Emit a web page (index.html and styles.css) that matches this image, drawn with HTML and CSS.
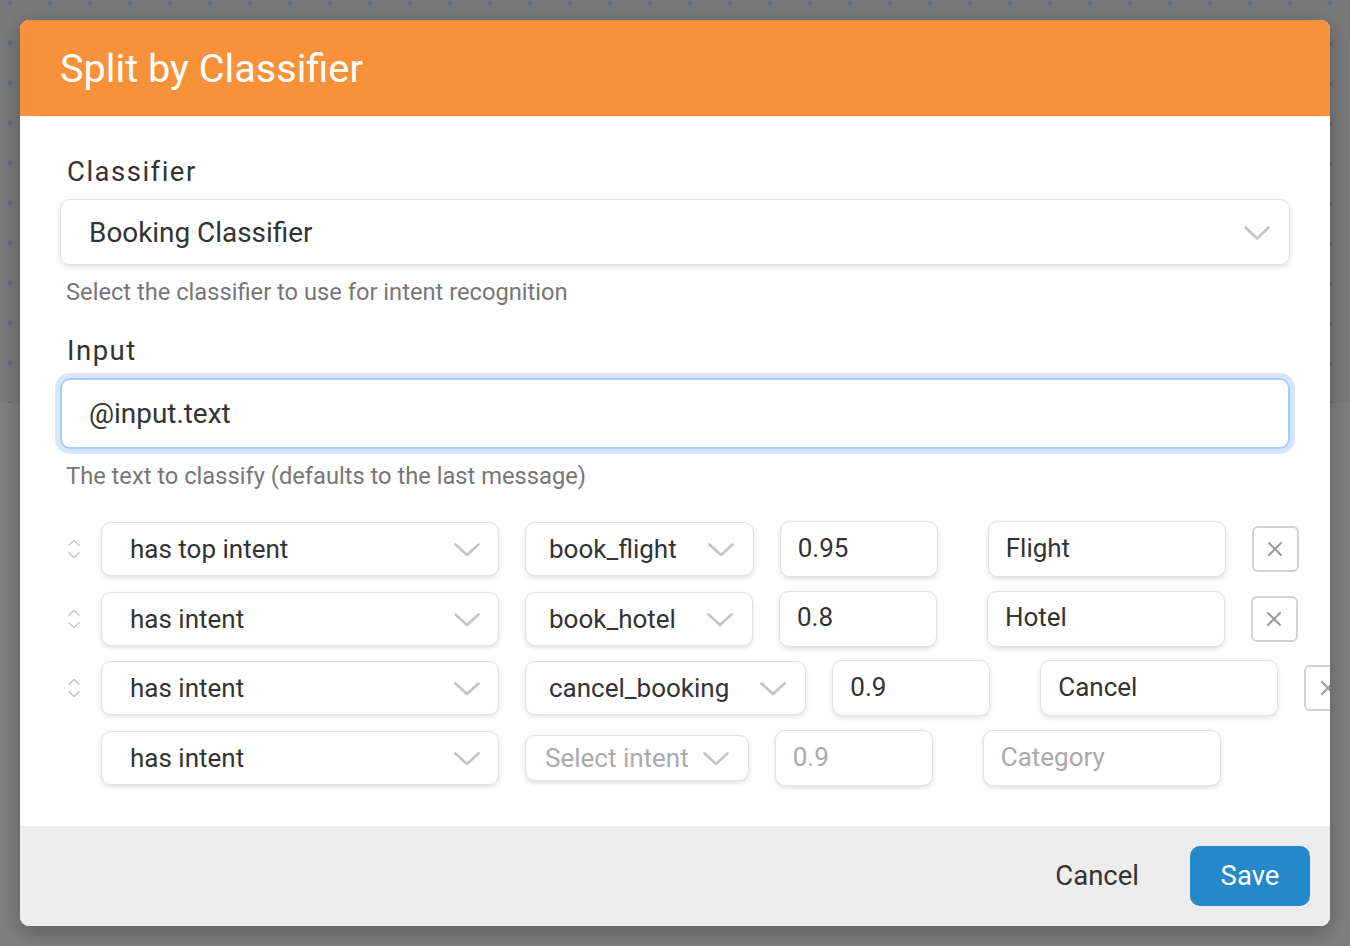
FILE: index.html
```html
<!DOCTYPE html>
<html lang="en">
<head>
<meta charset="utf-8">
<title>Split by Classifier</title>
<link rel="stylesheet" href="styles.css">
</head>
<body>
<div class="dialog">
  <div class="dialog-header">Split by Classifier</div>
  <div class="dialog-body">
    <div class="field">
      <div class="label">Classifier</div>
      <div class="select-lg">
        <span>Booking Classifier</span>
        <svg class="chev-lg" width="26" height="15" viewBox="0 0 26 15"><polyline points="1.5,1.5 13,12.5 24.5,1.5" fill="none" stroke="#c4c4c4" stroke-width="2.6" stroke-linecap="round" stroke-linejoin="round"/></svg>
      </div>
      <div class="help">Select the classifier to use for intent recognition</div>
    </div>
    <div class="field field-input">
      <div class="label">Input</div>
      <div class="input-lg">@input.text</div>
      <div class="help">The text to classify (defaults to the last message)</div>
    </div>

    <div class="rows">
      <div class="row">
        <div class="handle"><svg width="14" height="20" viewBox="0 0 14 20"><polyline points="1.5,6.5 7,1.5 12.5,6.5" fill="none" stroke="#c6c6c6" stroke-width="1.6"/><polyline points="1.5,13.5 7,18.5 12.5,13.5" fill="none" stroke="#c6c6c6" stroke-width="1.6"/></svg></div>
        <div class="box op-select"><span>has top intent</span><svg class="chev" width="26" height="14" viewBox="0 0 26 14"><polyline points="1.5,1.5 13,12 24.5,1.5" fill="none" stroke="#c4c4c4" stroke-width="2.6" stroke-linecap="round" stroke-linejoin="round"/></svg></div>
        <div class="box intent-select"><span>book_flight</span><svg class="chev" width="26" height="14" viewBox="0 0 26 14"><polyline points="1.5,1.5 13,12 24.5,1.5" fill="none" stroke="#c4c4c4" stroke-width="2.6" stroke-linecap="round" stroke-linejoin="round"/></svg></div>
        <div class="box threshold">0.95</div>
        <div class="box category">Flight</div>
        <div class="remove"><svg width="16" height="16" viewBox="0 0 16 16"><path d="M2 2 L14 14 M14 2 L2 14" stroke="#9a9a9a" stroke-width="2" stroke-linecap="round"/></svg></div>
      </div>
      <div class="row">
        <div class="handle"><svg width="14" height="20" viewBox="0 0 14 20"><polyline points="1.5,6.5 7,1.5 12.5,6.5" fill="none" stroke="#c6c6c6" stroke-width="1.6"/><polyline points="1.5,13.5 7,18.5 12.5,13.5" fill="none" stroke="#c6c6c6" stroke-width="1.6"/></svg></div>
        <div class="box op-select"><span>has intent</span><svg class="chev" width="26" height="14" viewBox="0 0 26 14"><polyline points="1.5,1.5 13,12 24.5,1.5" fill="none" stroke="#c4c4c4" stroke-width="2.6" stroke-linecap="round" stroke-linejoin="round"/></svg></div>
        <div class="box intent-select"><span>book_hotel</span><svg class="chev" width="26" height="14" viewBox="0 0 26 14"><polyline points="1.5,1.5 13,12 24.5,1.5" fill="none" stroke="#c4c4c4" stroke-width="2.6" stroke-linecap="round" stroke-linejoin="round"/></svg></div>
        <div class="box threshold">0.8</div>
        <div class="box category">Hotel</div>
        <div class="remove"><svg width="16" height="16" viewBox="0 0 16 16"><path d="M2 2 L14 14 M14 2 L2 14" stroke="#9a9a9a" stroke-width="2" stroke-linecap="round"/></svg></div>
      </div>
      <div class="row">
        <div class="handle"><svg width="14" height="20" viewBox="0 0 14 20"><polyline points="1.5,6.5 7,1.5 12.5,6.5" fill="none" stroke="#c6c6c6" stroke-width="1.6"/><polyline points="1.5,13.5 7,18.5 12.5,13.5" fill="none" stroke="#c6c6c6" stroke-width="1.6"/></svg></div>
        <div class="box op-select"><span>has intent</span><svg class="chev" width="26" height="14" viewBox="0 0 26 14"><polyline points="1.5,1.5 13,12 24.5,1.5" fill="none" stroke="#c4c4c4" stroke-width="2.6" stroke-linecap="round" stroke-linejoin="round"/></svg></div>
        <div class="box intent-select"><span>cancel_booking</span><svg class="chev" width="26" height="14" viewBox="0 0 26 14"><polyline points="1.5,1.5 13,12 24.5,1.5" fill="none" stroke="#c4c4c4" stroke-width="2.6" stroke-linecap="round" stroke-linejoin="round"/></svg></div>
        <div class="box threshold">0.9</div>
        <div class="box category">Cancel</div>
        <div class="remove"><svg width="16" height="16" viewBox="0 0 16 16"><path d="M2 2 L14 14 M14 2 L2 14" stroke="#9a9a9a" stroke-width="2" stroke-linecap="round"/></svg></div>
      </div>
      <div class="row">
        <div class="handle"></div>
        <div class="box op-select"><span>has intent</span><svg class="chev" width="26" height="14" viewBox="0 0 26 14"><polyline points="1.5,1.5 13,12 24.5,1.5" fill="none" stroke="#c4c4c4" stroke-width="2.6" stroke-linecap="round" stroke-linejoin="round"/></svg></div>
        <div class="box intent-select placeholder-select"><span>Select intent</span><svg class="chev" width="26" height="14" viewBox="0 0 26 14"><polyline points="1.5,1.5 13,12 24.5,1.5" fill="none" stroke="#c4c4c4" stroke-width="2.6" stroke-linecap="round" stroke-linejoin="round"/></svg></div>
        <div class="box threshold placeholder">0.9</div>
        <div class="box category placeholder">Category</div>
      </div>
    </div>
  </div>
  <div class="dialog-footer">
    <button class="btn btn-cancel">Cancel</button>
    <button class="btn btn-save">Save</button>
  </div>
</div>
</body>
</html>
```

FILE: styles.css
```css
html, body {
  margin: 0;
  height: 100%;
}

body {
  box-sizing: border-box;
  padding: 20px;
  font-family: Roboto, "Liberation Sans", sans-serif;
  color: #333;
  background:
    linear-gradient(to bottom, transparent 403px, #7f7f7f 403px),
    radial-gradient(circle at 20px 20px, #5c6c7e 0, #5c6c7e 2px, transparent 2.6px) -10px -16.5px / 40px 40px,
    #7a7a7a;
  overflow: hidden;
}

.dialog {
  width: 1310px;
  height: 906px;
  background: #fff;
  border-radius: 9px;
  overflow: hidden;
  display: flex;
  flex-direction: column;
  box-shadow: 0 6px 22px rgba(0, 0, 0, 0.28);
}

.dialog-header {
  height: 96px;
  flex-shrink: 0;
  background: #f7923a;
  color: #fff;
  font-size: 39.7px;
  display: flex;
  align-items: center;
  padding-left: 40px;
  box-sizing: border-box;
}

.dialog-body {
  flex: 1;
  padding: 38px 40px 0 40px;
}

.label {
  font-size: 27.5px;
  line-height: 36px;
  letter-spacing: 1.5px;
  padding-left: 7px;
  margin-bottom: 9px;
  color: #333;
}

.select-lg {
  box-sizing: border-box;
  height: 66px;
  border: 1px solid #e2e2e2;
  border-radius: 10px;
  box-shadow: 0 2px 6px rgba(0, 0, 0, 0.13);
  display: flex;
  align-items: center;
  justify-content: space-between;
  padding: 0 19px 0 28px;
  font-size: 27.9px;
  color: #333;
}

.chev-lg {
  margin-top: 2px;
}

.help {
  font-size: 23.7px;
  line-height: 30px;
  color: #777;
  padding-left: 6px;
  margin-top: 12px;
}

.field-input {
  margin-top: 26px;
}

.input-lg {
  box-sizing: border-box;
  height: 71px;
  border: 2px solid #a9cbfa;
  border-radius: 10px;
  box-shadow: 0 0 0 5px #d5e6fd;
  display: flex;
  align-items: center;
  padding-left: 27px;
  font-size: 27.9px;
  color: #333;
}

.rows {
  margin-top: 30px;
  display: flex;
  flex-direction: column;
  gap: 13.7px;
}

.row {
  height: 56px;
  display: flex;
  align-items: center;
  flex-shrink: 0;
  width: max-content;
}

.handle {
  width: 28px;
  margin-right: 13px;
  display: flex;
  justify-content: center;
  align-items: center;
}

.box {
  box-sizing: border-box;
  flex-shrink: 0;
  border: 1px solid #e2e2e2;
  border-radius: 10px;
  box-shadow: 0 2px 5px rgba(0, 0, 0, 0.13);
  display: flex;
  align-items: center;
  font-size: 26px;
  color: #333;
  background: #fff;
}

.op-select {
  width: 398px;
  height: 54px;
  padding: 0 18px 0 28px;
  justify-content: space-between;
}

.intent-select {
  height: 54px;
  margin-left: 26px;
  padding: 0 19px 0 23px;
  gap: 31px;
}

.placeholder-select {
  height: 46px;
  padding: 0 19px 0 19px;
  gap: 14px;
  color: #aaa;
}

.chev {
  margin-top: 2px;
}

.threshold {
  width: 158px;
  height: 56px;
  margin-left: 26px;
  padding: 0 0 3px 17px;
}

.category {
  width: 238px;
  height: 56px;
  margin-left: 50px;
  padding: 0 0 3px 17px;
}

.placeholder {
  color: #aaa;
}

.remove {
  box-sizing: border-box;
  flex-shrink: 0;
  width: 47px;
  height: 46px;
  margin-left: 26px;
  border: 2px solid #d3d3d3;
  border-radius: 6px;
  display: flex;
  align-items: center;
  justify-content: center;
}

.dialog-footer {
  height: 100px;
  flex-shrink: 0;
  background: #ededed;
  display: flex;
  align-items: center;
  justify-content: flex-end;
  padding-right: 20px;
}

.btn {
  font-family: Roboto, "Liberation Sans", sans-serif;
  font-size: 27.5px;
  height: 60px;
  padding-bottom: 3px;
  border: none;
  border-radius: 10px;
  cursor: pointer;
}

.btn-cancel {
  background: transparent;
  color: #333;
  padding-left: 26px;
  padding-right: 26px;
  margin-right: 25px;
}

.btn-save {
  width: 120px;
  background: #2488c9;
  color: #fff;
}
```
